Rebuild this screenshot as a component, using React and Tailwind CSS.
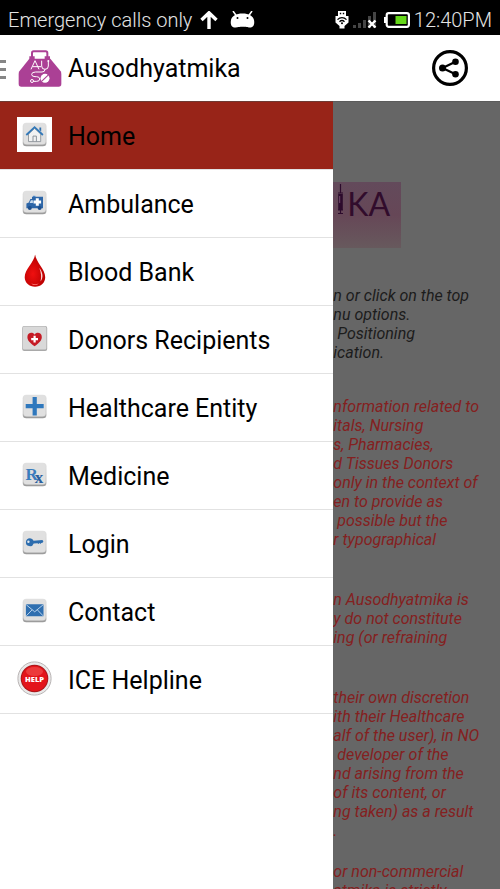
import { useId, useState } from 'react';

const NOTICES = [
  {
    className: 'text-[#1c1c1c]',
    lines: ['n or click on the top', 'nu options.', ' Positioning', 'ication.'],
  },
  {
    className: 'mt-[35px] text-[#842020]',
    lines: [
      'nformation related to',
      'itals, Nursing',
      's, Pharmacies,',
      'd Tissues Donors',
      'only in the context of',
      'en to provide as',
      ' possible but the',
      'r typographical',
    ],
  },
  {
    className: 'mt-[41px] text-[#842020]',
    lines: ['n Ausodhyatmika is', 'y do not constitute', 'ing (or refraining'],
  },
  {
    className: 'mt-[41px] text-[#842020]',
    lines: [
      'their own discretion',
      'ith their Healthcare',
      'alf of the user), in NO',
      ' developer of the',
      'nd arising from the',
      'of its content, or',
      'ng taken) as a result',
      '.',
    ],
  },
  {
    className: 'mt-[22px] text-[#842020]',
    lines: ['or non-commercial', 'atmika is strictly'],
  },
];

function Tile({ children }) {
  const id = useId();
  return (
    <svg className="size-[35px]" viewBox="0 0 35 35" aria-hidden="true">
      <defs>
        <linearGradient id={id} x1="0" y1="0" x2="0" y2="1">
          <stop offset="0" stopColor="#e2e2e2" />
          <stop offset="0.8" stopColor="#c4c4c4" />
          <stop offset="1" stopColor="#949494" />
        </linearGradient>
      </defs>
      <rect x="5.7" y="5.7" width="23.8" height="23.6" rx="3.6" fill={`url(#${id})`} />
      <rect x="6.6" y="6.3" width="22" height="21.2" rx="3.2" fill="#e0e0e0" />
      {children}
    </svg>
  );
}

function HomeIcon() {
  return (
    <Tile>
      <path d="M11.5 17v7.6h12.2V17l-6.1-5.6z" fill="#f2f2f2" stroke="#8d949b" strokeWidth="0.9" />
      <path d="M16 24.6v-5.5h3.4v5.5" fill="none" stroke="#8d949b" strokeWidth="1" />
      <path d="M22.4 10.4h1.8v4.2l-1.8-1.7z" fill="#2f6fac" />
      <path d="M9.3 18l8.3-7.8 8.3 7.8" fill="none" stroke="#3278b8" strokeWidth="1.8" />
    </Tile>
  );
}

function AmbulanceIcon() {
  return (
    <Tile>
      <path d="M15 11.8h11V23.200H9.400v-4.600l2.400-1 1.600-3.600H15z" fill="#2d66a8" />
      <path d="M13.900 15.200h2v2.800h-3.300z" fill="#c9dcee" />
      <path d="M18.800 13.300h3v2.300h2.300v2.900h-2.300v2.300h-3v-2.300h-2.300v-2.900h2.300z" fill="#fff" />
      <circle cx="12.800" cy="23" r="2" fill="#1e4f8c" />
      <circle cx="22.600" cy="23" r="2" fill="#1e4f8c" />
      <path d="M16 10.800h2.400v1.200H16z" fill="#4b86c4" />
    </Tile>
  );
}

function BloodIcon() {
  const id = useId();
  return (
    <svg className="size-[35px]" viewBox="0 0 35 35" aria-hidden="true">
      <defs>
        <radialGradient id={id} cx="0.4" cy="0.6" r="0.6">
          <stop offset="0" stopColor="#f01010" />
          <stop offset="1" stopColor="#b80000" />
        </radialGradient>
      </defs>
      <path d="M18.1 1.500C18.900 9 28.200 16.300 28.200 24.200c0 5.600-4.300 9.500-10.100 9.500S7.700 29.800 7.700 24.200C7.700 16.300 17.300 9 18.100 1.500z" fill={`url(#${id})`} />
      <path d="M22.300 15c3.400 4 4.600 9.500 1.200 13.500 1.200-4.600.6-9-1.200-13.500z" fill="#fff" opacity="0.85" />
      <path d="M14.300 30.500c2.800 1 5.200.9 7.400 0-2 2-5.500 2-7.400 0z" fill="#ff7070" />
    </svg>
  );
}

function DonorsIcon() {
  return (
    <svg className="size-[35px]" viewBox="0 0 35 35" aria-hidden="true">
      <rect x="5.200" y="5" width="25" height="25" rx="2" fill="#a9a9a9" />
      <rect x="5.800" y="5.500" width="23.600" height="23" rx="1.500" fill="#d9d9d9" />
      <path d="M17.600 25.300C12.500 21.600 10.400 19.300 10.400 16c0-4.600 5.500-5.400 7.200-2.300 1.700-3.100 7.200-2.300 7.200 2.300 0 3.300-2.100 5.600-7.200 9.300z" fill="#c51a24" />
      <path d="M16.500 14.800h2.200v2.300H21v2.200h-2.300v2.300h-2.200v-2.300h-2.300v-2.200h2.300z" fill="#fff" />
    </svg>
  );
}

function HealthcareIcon() {
  return (
    <Tile>
      <path d="M15.600 8h4.200v7.100h6.900v4.200h-6.900v7.100h-4.200v-7.100H8.700v-4.200h6.900z" fill="#2f78bd" />
    </Tile>
  );
}

function MedicineIcon() {
  return (
    <Tile>
      <text x="8.500" y="22.500" fontFamily="Liberation Serif, serif" fontWeight="bold" fontSize="17" fill="#3a7dbd">
        R<tspan dx="-3" dy="3" fill="#2a5f9e">x</tspan>
      </text>
    </Tile>
  );
}

function LoginIcon() {
  return (
    <Tile>
      <path d="M13 13.200a4 4 0 0 1 3.600 2.500l8.800-.6 1 1.200-.8 1.400-1.400.2-.6 1-1-.8-1.100.9-1-.7-3.800.2A4 4 0 1 1 13 13.200z" fill="#2d6dae" />
      <circle cx="11.400" cy="16.800" r="1.200" fill="#dfe8f0" />
    </Tile>
  );
}

function ContactIcon() {
  return (
    <Tile>
      <rect x="8.900" y="11.300" width="17.600" height="12" rx="0.600" fill="#2f6fb0" />
      <path d="M9.300 11.800l8.400 7 8.400-7M9.300 22.800l5.800-6M26.100 22.800l-5.800-6" fill="none" stroke="#c6ddf2" strokeWidth="0.900" />
    </Tile>
  );
}

function HelpIcon() {
  return (
    <svg className="size-[35px]" viewBox="0 0 35 35" aria-hidden="true">
      <circle cx="17.500" cy="17.500" r="16.600" fill="#e9e9e9" stroke="#b9b4b4" strokeWidth="1" />
      <circle cx="17.500" cy="17.500" r="13.800" fill="#a8161a" />
      <circle cx="17.500" cy="17.500" r="12.800" fill="#e3141a" />
      <ellipse cx="17.500" cy="10.500" rx="8.500" ry="4.500" fill="#f04a4a" opacity="0.700" />
      <text x="17.500" y="20.800" textAnchor="middle" fontFamily="Open Sans, sans-serif" fontWeight="800" fontSize="7.500" fill="#fff">HELP</text>
    </svg>
  );
}

const MENU = [
  { label: 'Home', icon: HomeIcon },
  { label: 'Ambulance', icon: AmbulanceIcon },
  { label: 'Blood Bank', icon: BloodIcon },
  { label: 'Donors Recipients', icon: DonorsIcon },
  { label: 'Healthcare Entity', icon: HealthcareIcon },
  { label: 'Medicine', icon: MedicineIcon },
  { label: 'Login', icon: LoginIcon },
  { label: 'Contact', icon: ContactIcon },
  { label: 'ICE Helpline', icon: HelpIcon },
];

function StatusBar() {
  return (
    <div className="flex h-[35px] shrink-0 items-center bg-black pt-1 pr-2 pl-2 text-[20px] leading-6 font-light text-[#e4e4e4]">
      <span className="whitespace-nowrap">Emergency calls only</span>
      <svg className="ml-2 h-[18px] w-[18px]" viewBox="0 0 18 18" aria-hidden="true">
        <path d="M1.500 9L9 1.800 16.500 9M9 2.500V18" fill="none" stroke="#fff" strokeWidth="3.400" />
      </svg>
      <svg className="ml-3 h-[18px] w-[25px]" viewBox="0 0 25 18" aria-hidden="true">
        <path d="M3 0l3.500 5M22 0l-3.500 5" stroke="#fff" strokeWidth="1.500" />
        <path d="M1 9C2 5 6 2.500 12.500 2.500S23 5 24 9c1 5-1 7.500-4 7.500-2 0-2-.8-7.500-.8S7 16.500 5 16.500C2 16.500 0 14 1 9z" fill="#fff" />
        <circle cx="7.500" cy="7" r="1" fill="#000" />
        <circle cx="17.500" cy="7" r="1" fill="#000" />
      </svg>
      <div className="ml-auto flex items-center">
        <svg className="h-[18px] w-[14px]" viewBox="0 0 14 18" aria-hidden="true">
          <path d="M3 0h8v5h2.500v6.500L9.500 15v2.500h-5V15l-4-3.500V5H3z" fill="#fff" />
          <path d="M4.800 1.800h1.400v1.400H4.800zM7.800 1.800h1.400v1.400H7.800z" fill="#000" />
          <path d="M2.500 8.600c2.600-2.600 6.400-2.600 9 0M4.500 10.700c1.500-1.500 3.500-1.500 5 0" fill="none" stroke="#000" strokeWidth="1.300" />
          <circle cx="7" cy="12.200" r="1" fill="#000" />
        </svg>
        <svg className="ml-1 h-[18px] w-6" viewBox="0 0 24 18" aria-hidden="true">
          <path d="M0 14h3v3H0zM5 12h3v5H5zM10 9h3v8h-3zM15 5h3v12h-3zM20 1h3v16h-3z" fill="#454545" />
          <path d="M15.500 9.500l7 7M22.500 9.500l-7 7" stroke="#fff" strokeWidth="2.400" />
        </svg>
        <svg className="ml-[7px] h-4 w-[26px]" viewBox="0 0 26 16" aria-hidden="true">
          <path d="M0 5h2.500v6H0z" fill="#fff" />
          <rect x="2.700" y="1.200" width="22.200" height="13.600" rx="2" fill="none" stroke="#fff" strokeWidth="2.200" />
          <path d="M11.500 4h11v8h-11z" fill="#66d81a" />
        </svg>
        <span className="ml-1">12:40PM</span>
      </div>
    </div>
  );
}

function Logo() {
  return (
    <svg className="h-[37px] w-[44px]" viewBox="0 0 132 111" aria-hidden="true">
      <path d="M42 24V9q0-5 5-5h36q5 0 5 5v15" fill="none" stroke="#ab4095" strokeWidth="6" />
      <path d="M34 19h16v8H34zM80 19h16v8H80z" fill="#ab4095" />
      <path d="M34 26h63l31 38q2 3 2 8v30q0 8-8 8H10q-8 0-8-8V72q0-5 2-8z" fill="#ab4095" />
      <g fill="none" stroke="#fff" strokeWidth="3">
        <path d="M39 58l12-26 12 26M44 50h25M71 32v16q0 10 10 10t10-10V34" />
        <path d="M81 58q0 8-9 8H53q-12 0-12 7t10 7h5q9 0 9 7t-9 7H46" />
        <circle cx="42" cy="93" r="4.500" />
      </g>
      <circle cx="91" cy="33" r="3" fill="#fff" />
      <circle cx="81" cy="85" r="13.500" fill="#fff" />
      <path d="M70 95l22-21" stroke="#ab4095" strokeWidth="3.500" />
    </svg>
  );
}

function ActionBar({ onToggle }) {
  return (
    <header className="flex h-[66px] shrink-0 items-center bg-white">
      <button type="button" aria-label="Toggle menu" onClick={onToggle} className="flex w-[6px] flex-col gap-[5px] pt-[2px]">
        <span className="h-[3px] bg-[#868686]" />
        <span className="h-[3px] bg-[#868686]" />
        <span className="h-[3px] bg-[#868686]" />
      </button>
      <div className="ml-3">
        <Logo />
      </div>
      <h1 className="ml-[6px] pt-[2px] text-[25px] leading-8 text-black">Ausodhyatmika</h1>
      <button type="button" aria-label="Share" className="mr-8 ml-auto">
        <svg className="size-9" viewBox="0 0 36 36" aria-hidden="true">
          <circle cx="18" cy="18" r="16.400" fill="none" stroke="#000" strokeWidth="3.200" />
          <path d="M23.500 11.800L10.500 18l13 6.200" fill="none" stroke="#000" strokeWidth="2.200" />
          <circle cx="10.500" cy="18" r="3.500" />
          <circle cx="23.500" cy="11.800" r="3.300" />
          <circle cx="23.500" cy="24.200" r="3.300" />
        </svg>
      </button>
    </header>
  );
}

function Banner() {
  return (
    <div className="flex h-[66px] w-[68px] shrink-0 bg-linear-to-b from-[#634a5b] via-[#664757] to-[#67595d] pt-[2px] pl-[3px]">
      <svg className="h-8 w-[9px] shrink-0" viewBox="0 0 9 32" aria-hidden="true">
        <path d="M4.500 0v9M2 9h5M2 26h5M4.500 26v3M2 29.500h5" stroke="#2c0a2c" strokeWidth="1.200" />
        <rect x="2.200" y="10" width="4.600" height="16" fill="#2c0a2c" />
        <path d="M3.700 12v7" stroke="#7c5074" strokeWidth="0.900" />
      </svg>
      <span className="ml-[2px] font-['Lato'] text-[32px] leading-10 text-[#310c2c]">KA</span>
    </div>
  );
}

function Drawer({ active, onSelect }) {
  return (
    <nav className="w-2/3 shrink-0 border-t border-[#6e3a33] bg-white">
      <ul>
        {MENU.map(({ label, icon: Icon }) => (
          <li key={label} className="border-b border-[#e2e2e2]">
            <a
              href="#"
              onClick={() => onSelect(label)}
              className={
                active === label
                  ? 'flex h-[67px] items-center gap-4 bg-[#982418] pb-[2px] pl-[17px] text-[25px] leading-8 text-black'
                  : 'flex h-[67px] items-center gap-4 pb-[2px] pl-[17px] text-[25px] leading-8 text-black'
              }
            >
              <span className="bg-white">
                <Icon />
              </span>
              <span className="pt-1">{label}</span>
            </a>
          </li>
        ))}
      </ul>
    </nav>
  );
}

export default function App() {
  const [open, setOpen] = useState(true);
  const [active, setActive] = useState('Home');

  return (
    <div className="flex h-screen flex-col overflow-hidden bg-[#666] font-['Roboto',sans-serif]">
      <StatusBar />
      <ActionBar onToggle={() => setOpen(!open)} />
      <div className="flex min-h-0 flex-1">
        {open && <Drawer active={active} onSelect={setActive} />}
        <main className="min-w-0 flex-1 overflow-hidden border-t border-[#5c5c5c] pt-20">
          <Banner />
          <div className="mt-[38px] text-[16px] leading-[19px] whitespace-pre italic">
            {NOTICES.map((notice) => (
              <p key={notice.lines[0]} className={notice.className}>
                {notice.lines.map((line) => (
                  <span key={line} className="block">{line}</span>
                ))}
              </p>
            ))}
          </div>
        </main>
      </div>
    </div>
  );
}
